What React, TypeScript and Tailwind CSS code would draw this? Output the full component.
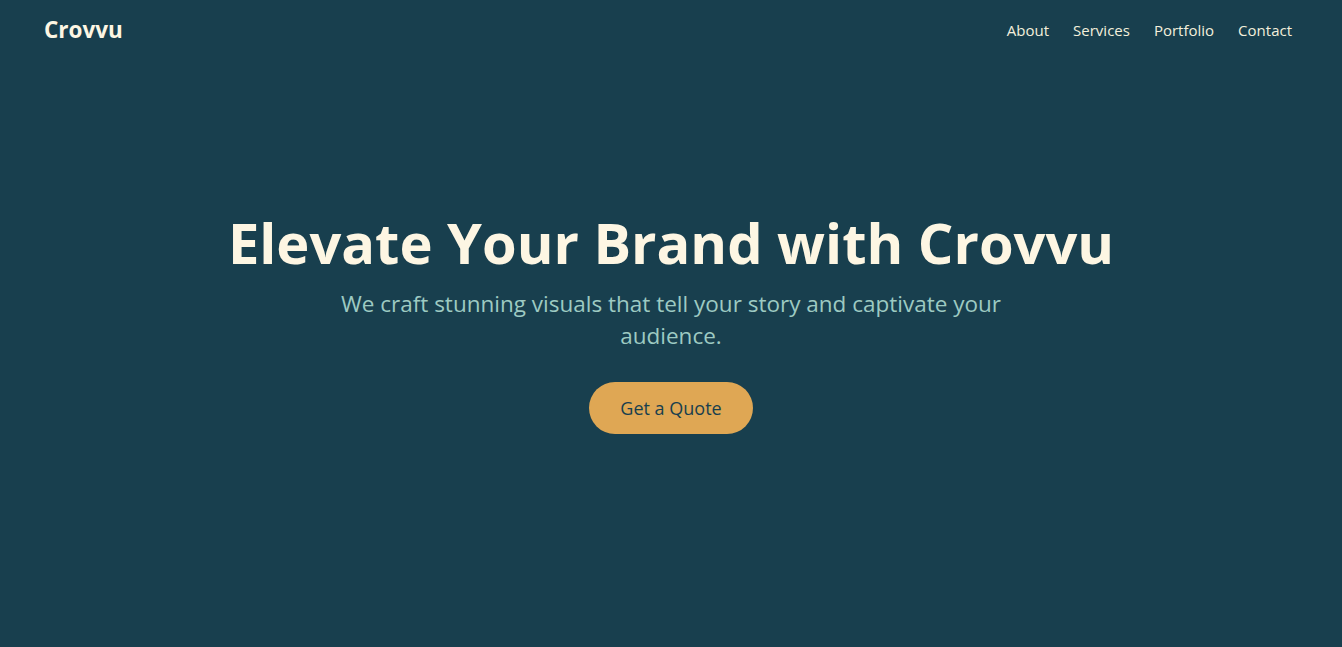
export default function App() {
    const links = ['About', 'Services', 'Portfolio', 'Contact'];

    return (
        <div className="relative min-h-screen bg-[#183f4e] font-['Open_Sans',sans-serif]">
            <nav className="absolute top-0 left-0 right-0 flex items-center justify-between pl-11 pr-[50px] py-[14px]">
                <span className="text-[22.5px] leading-8 font-bold text-[#fdf6e3]">Crovvu</span>
                <ul className="flex items-center gap-6">
                    {links.map((link) => (
                        <li key={link}>
                            <a href="#" className="text-[15px] leading-6 text-[#f3efdc]">
                                {link}
                            </a>
                        </li>
                    ))}
                </ul>
            </nav>

            <main className="min-h-screen flex flex-col items-center justify-center text-center px-6">
                <h1 className="text-[56px] leading-none font-bold text-[#fdf6e3] mb-4">
                    Elevate Your Brand with Crovvu
                </h1>
                <p className="max-w-2xl text-[22.5px] leading-8 text-[#9dcac2] mt-0.5 mb-[30px]">
                    We craft stunning visuals that tell your story and captivate your audience.
                </p>
                <button className="bg-[#dfa754] text-[#183f4e] text-lg font-medium px-[31px] py-3 rounded-full">
                    Get a Quote
                </button>
            </main>
        </div>
    );
}
